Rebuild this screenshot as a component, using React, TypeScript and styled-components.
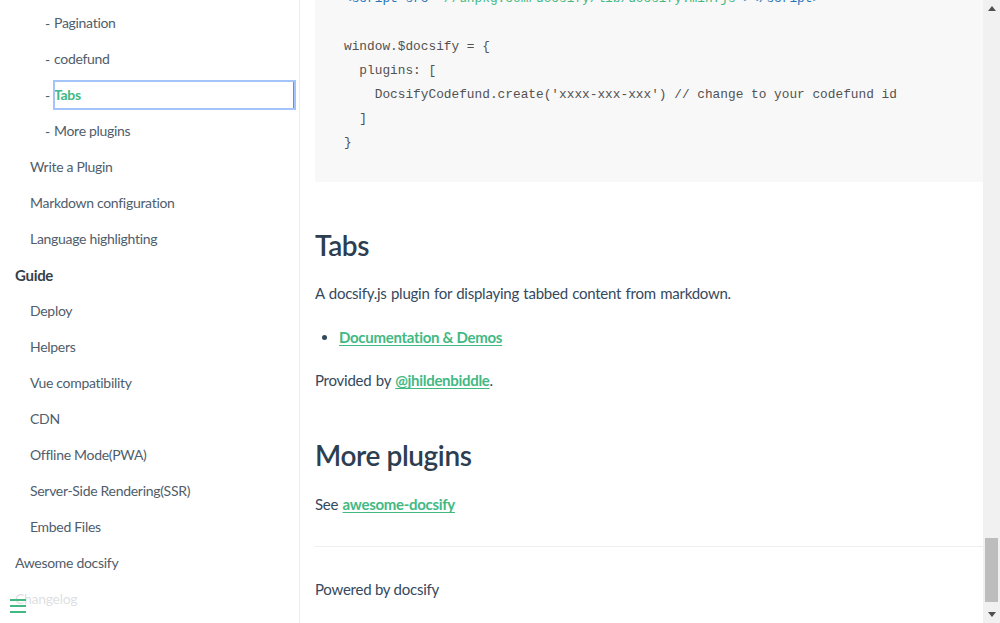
import React, { useLayoutEffect, useRef, useState } from 'react';
import styled, { createGlobalStyle } from 'styled-components';

const GlobalStyle = createGlobalStyle`
  html, body { margin: 0; padding: 0; height: 100%; }
  body {
    font-family: Lato, "Noto Sans", sans-serif;
    font-size: 15px;
    color: #34495e;
    background: #fff;
    overflow: hidden;
    -webkit-font-smoothing: antialiased;
  }
  #root { height: 100%; }
`;

type NavItem = {
  label: string;
  level: number;
  sub?: boolean;
  strong?: boolean;
  active?: boolean;
};

const nav: NavItem[] = [
  { label: 'Getting started', level: 0, strong: true },
  { label: 'Quick start', level: 1 },
  { label: 'Writing more pages', level: 1 },
  { label: 'Custom navbar', level: 1 },
  { label: 'Cover page', level: 1 },
  { label: 'Customization', level: 0, strong: true },
  { label: 'Configuration', level: 1 },
  { label: 'Themes', level: 1 },
  { label: 'List of Plugins', level: 1 },
  { label: 'Full text search', level: 2, sub: true },
  { label: 'Google Analytics', level: 2, sub: true },
  { label: 'Emoji', level: 2, sub: true },
  { label: 'External Script', level: 2, sub: true },
  { label: 'Image Zoom', level: 2, sub: true },
  { label: 'Edit on github', level: 2, sub: true },
  { label: 'Demo code with instant preview', level: 2, sub: true },
  { label: 'Copy to Clipboard', level: 2, sub: true },
  { label: 'Disqus', level: 2, sub: true },
  { label: 'Gitalk', level: 2, sub: true },
  { label: 'Pagination', level: 2, sub: true },
  { label: 'codefund', level: 2, sub: true },
  { label: 'Tabs', level: 2, sub: true, active: true },
  { label: 'More plugins', level: 2, sub: true },
  { label: 'Write a Plugin', level: 1 },
  { label: 'Markdown configuration', level: 1 },
  { label: 'Language highlighting', level: 1 },
  { label: 'Guide', level: 0, strong: true },
  { label: 'Deploy', level: 1 },
  { label: 'Helpers', level: 1 },
  { label: 'Vue compatibility', level: 1 },
  { label: 'CDN', level: 1 },
  { label: 'Offline Mode(PWA)', level: 1 },
  { label: 'Server-Side Rendering(SSR)', level: 1 },
  { label: 'Embed Files', level: 1 },
  { label: 'Awesome docsify', level: 0 },
  { label: 'Changelog', level: 0 },
];

type Section = { title: string; text: string; code: string[] };

const sections: Section[] = [
  {
    title: 'Full text search',
    text: 'By default, the hyperlink on the current page is recognized and the content is saved in localStorage. You can also specify the path to the files.',
    code: [
      '<script>',
      '  window.$docsify = {',
      "    search: 'auto', // default",
      '',
      '    search : [',
      "      '/',            // => /README.md",
      "      '/guide',       // => /guide.md",
      "      '/get-started', // => /get-started.md",
      "      '/zh-cn/',      // => /zh-cn/README.md",
      '    ],',
      '',
      '    // complete configuration parameters',
      '    search: {',
      '      maxAge: 86400000, // Expiration time, the default one day',
      "      paths: [], // or 'auto'",
      "      placeholder: 'Type to search',",
      '',
      '      // Localization',
      '      placeholder: {',
      "        '/de-de/': 'Suche',",
      "        '/': 'Type to search'",
      '      },',
      '',
      "      noData: 'No Results!',",
      '',
      '      // Localization',
      '      noData: {',
      "        '/de-de/': 'Keine Ergebnisse',",
      "        '/': 'No Results'",
      '      },',
      '',
      '      // Headline depth, 1 - 6',
      '      depth: 2,',
      '',
      '      hideOtherSidebarContent: false, // whether or not to hide other sidebar content',
      '',
      '      // To avoid search index collision',
      '      // between multiple websites under the same domain',
      "      namespace: 'website-1',",
      '    }',
      '  }',
      '</script>',
      '<script src="//unpkg.com/docsify/lib/docsify.min.js"></script>',
      '<script src="//unpkg.com/docsify/lib/plugins/search.min.js"></script>',
    ],
  },
  {
    title: 'Google Analytics',
    text: 'Install the plugin and configure the track id.',
    code: [
      '<script>',
      '  window.$docsify = {',
      "    ga: 'UA-XXXXX-Y'",
      '  }',
      '</script>',
      '<script src="//unpkg.com/docsify/lib/docsify.min.js"></script>',
      '<script src="//unpkg.com/docsify/lib/plugins/ga.min.js"></script>',
    ],
  },
  {
    title: 'Emoji',
    text: 'The default is to support parsing emoji. For example :100: will be parsed to an emoji. But it is not precise because there is no matching non-emoji string.',
    code: ['<script src="//unpkg.com/docsify/lib/plugins/emoji.min.js"></script>'],
  },
  {
    title: 'External Script',
    text: "If the script on the page is an external one (imports a js file via src attribute), you'll need this plugin to make it work.",
    code: ['<script src="//unpkg.com/docsify/lib/plugins/external-script.min.js"></script>'],
  },
  {
    title: 'Image Zoom',
    text: "Medium's image zoom. Based on medium-zoom.",
    code: [
      '<script src="//unpkg.com/docsify/lib/plugins/zoom-image.min.js"></script>',
      '',
      "![](image.png ':no-zoom')",
    ],
  },
  {
    title: 'Edit on github',
    text: 'Add Edit on github button on every pages. Provided by @njleonzhang, see document.',
    code: ['<script src="//unpkg.com/docsify-edit-on-github/index.js"></script>'],
  },
  {
    title: 'Demo code with instant preview and jsfiddle integration',
    text: 'With this plugin, sample code can be rendered on the page instantly, so that the readers can see the preview immediately. When readers expand the demo box, the source code and description are shown there. If they click the button Try in Jsfiddle, jsfiddle.net will be opened with the code of this sample, which allow readers to revise the code and try on their own.',
    code: [
      '<script src="//unpkg.com/vue/dist/vue.min.js"></script>',
      '<script src="//unpkg.com/docsify-demo-box-vue/dist/docsify-demo-box-vue.min.js"></script>',
      '<script>',
      '  window.$docsify = {',
      '    plugins: [',
      '      DemoBoxVue.create(jsResources, cssResources, bootstrapScript)',
      '    ]',
      '  }',
      '</script>',
      '',
      '<script src="//unpkg.com/react/umd/react.production.min.js"></script>',
      '<script src="//unpkg.com/react-dom/umd/react-dom.production.min.js"></script>',
      '<script src="//unpkg.com/docsify-demo-box-react/dist/docsify-demo-box-react.min.js"></script>',
      '<script>',
      '  window.$docsify = {',
      '    plugins: [',
      '      DemoBoxReact.create(globalScripts, bootstrapScript)',
      '    ]',
      '  }',
      '</script>',
    ],
  },
  {
    title: 'Copy to Clipboard',
    text: 'Add a simple Click to copy button to all preformatted code blocks to effortlessly allow users to copy example code from your docs. Provided by @jperasmus.',
    code: ['<script src="//unpkg.com/docsify-copy-code"></script>'],
  },
  {
    title: 'Disqus',
    text: 'Disqus comments.',
    code: [
      '<script>',
      '  window.$docsify = {',
      "    disqus: 'shortname'",
      '  }',
      '</script>',
      '<script src="//unpkg.com/docsify/lib/plugins/disqus.min.js"></script>',
    ],
  },
  {
    title: 'Gitalk',
    text: 'Gitalk is a modern comment component based on Github Issue and Preact.',
    code: [
      '<link rel="stylesheet" href="//unpkg.com/gitalk/dist/gitalk.css">',
      '',
      '<script src="//unpkg.com/docsify/lib/plugins/gitalk.min.js"></script>',
      '<script src="//unpkg.com/gitalk/dist/gitalk.min.js"></script>',
      '<script>',
      '  const gitalk = new Gitalk({',
      "    clientID: 'Github Application Client ID',",
      "    clientSecret: 'Github Application Client Secret',",
      "    repo: 'Github repo',",
      "    owner: 'Github repo owner',",
      "    admin: ['Github repo collaborators, only these guys can initialize github issues'],",
      '    // facebook-like distraction free mode',
      '    distractionFreeMode: false',
      '  })',
      '</script>',
    ],
  },
  {
    title: 'Pagination',
    text: 'Pagination for docsify. By @imyelo',
    code: [
      '<script src="//unpkg.com/docsify/lib/docsify.min.js"></script>',
      '<script src="//unpkg.com/docsify-pagination/dist/docsify-pagination.min.js"></script>',
    ],
  },
  {
    title: 'codefund',
    text: 'A plugin to add a simple codefund sponsorship banner to your docs.',
    code: [
      '<script src="//unpkg.com/docsify-plugin-codefund/index.js"></script>',
      '<script src="//unpkg.com/docsify/lib/docsify.min.js"></script>',
      '',
      'window.$docsify = {',
      '  plugins: [',
      "    DocsifyCodefund.create('xxxx-xxx-xxx') // change to your codefund id",
      '  ]',
      '}',
    ],
  },
];

const Layout = styled.div`
  display: flex;
  height: 100vh;
`;

const Sidebar = styled.aside`
  position: relative;
  flex: 0 0 300px;
  box-sizing: border-box;
  border-right: 1px solid rgba(0, 0, 0, 0.07);
  display: flex;
  flex-direction: column;
  overflow: hidden;
`;

const SidebarScroll = styled.nav`
  flex: 1;
  overflow-y: auto;
  scrollbar-width: none;
  &::-webkit-scrollbar { display: none; }
`;

const NavList = styled.ul`
  list-style: none;
  margin: 0;
  padding: 40px 4px 6px 0;
`;

const NavRow = styled.li<{ $level: number }>`
  height: 36px;
  display: flex;
  align-items: center;
  padding-left: ${(p) => 15 * (p.$level + 1)}px;
  font-size: 14px;
  color: #505d6b;
`;

const Dash = styled.span`
  width: 9px;
  flex: 0 0 9px;
  font-size: 14px;
  color: #505d6b;
`;

const NavLink = styled.a<{ $active?: boolean; $strong?: boolean }>`
  flex: 1;
  display: block;
  box-sizing: border-box;
  height: 28px;
  line-height: 28px;
  font-size: ${(p) => (p.$strong ? '15px' : '14px')};
  letter-spacing: -0.3px;
  font-weight: ${(p) => (p.$strong || p.$active ? 700 : 400)};
  color: ${(p) => (p.$active ? '#42b983' : p.$strong ? '#364149' : '#505d6b')};
  text-decoration: none;
  white-space: nowrap;
  overflow: hidden;
  text-overflow: ellipsis;
  ${(p) =>
    p.$active &&
    `
    border-right: 2px solid #3fb0a0;
    outline: 2px solid #a3c5fc;
    outline-offset: -1px;
  `}
`;

const Toggle = styled.button`
  position: absolute;
  left: 0;
  bottom: 0;
  width: 284px;
  padding: 10px 10px 6px;
  border: 0;
  background: rgba(255, 255, 255, 0.8);
  display: flex;
  flex-direction: column;
  align-items: flex-start;
  cursor: pointer;
`;

const ToggleBar = styled.span`
  display: block;
  width: 16px;
  height: 2px;
  margin-bottom: 4px;
  background: #42b983;
`;

const Main = styled.main`
  flex: 1;
  min-width: 0;
  overflow-y: scroll;
  scrollbar-width: none;
  &::-webkit-scrollbar { display: none; }
`;

const Article = styled.article`
  padding: 30px 0 21px 15px;
`;

const H1 = styled.h1`
  margin: 0 0 16px;
  font-size: 32px;
  line-height: 40px;
  font-weight: 700;
  color: #2c3e50;
`;

const H2 = styled.h2<{ $tight?: boolean }>`
  margin: ${(p) => (p.$tight ? 43 : 45)}px 0 0;
  padding-bottom: ${(p) => (p.$tight ? 1 : 0)}px;
  font-size: 28px;
  line-height: 36px;
  font-weight: 600;
  letter-spacing: -0.4px;
  color: #2c3e50;
`;

const P = styled.p`
  margin: 18px 0 0;
  line-height: 25.6px;
  letter-spacing: -0.25px;
  word-spacing: 0.8px;
`;

const List = styled.ul`
  margin: 18px 0 0;
  padding-left: 24px;
  line-height: 25.6px;
  letter-spacing: -0.3px;
`;

const Link = styled.a`
  color: #42b983;
  font-weight: 700;
  text-decoration: underline;
  text-underline-offset: 2px;
  letter-spacing: -0.3px;
`;

const Pre = styled.pre`
  margin: 18px 0 0;
  padding: 30px 29px 27px;
  background: #f8f8f8;
  font-family: "Liberation Mono", "DejaVu Sans Mono", monospace;
  font-size: 12.8px;
  line-height: 24px;
  color: #525252;
  white-space: pre;
  overflow: hidden;
`;

const CodeText = styled.code`
  font-family: inherit;
  font-size: inherit;
  line-height: inherit;
`;

const Tag = styled.span`
  color: #2973b7;
`;

const Str = styled.span`
  color: #42b983;
`;

const Footer = styled.footer`
  margin-top: 28px;
  border-top: 1px solid #eee;
  padding-top: 30px;
  line-height: 25.6px;
  letter-spacing: -0.25px;
`;

const ScrollBar = styled.div`
  flex: 0 0 17px;
  background: #f1f1f1;
  display: flex;
  flex-direction: column;
`;

const ArrowButton = styled.div`
  flex: 0 0 17px;
  display: flex;
  align-items: center;
  justify-content: center;
`;

const Track = styled.div`
  flex: 1;
  position: relative;
  margin: 0 2px 4px;
`;

const Thumb = styled.div`
  position: absolute;
  left: 0;
  right: 0;
  background: #bdbdbd;
`;

function CodeLine({ line }: { line: string }) {
  const m = line.match(/^(\s*)(<\w+ [\w-]+=)("[^"]*")(>(?:<\/\w+>)?)$/);
  if (m) {
    return (
      <>
        {m[1]}
        <Tag>{m[2]}</Tag>
        <Str>{m[3]}</Str>
        <Tag>{m[4]}</Tag>
        {'\n'}
      </>
    );
  }
  if (/^\s*<\/?\w+>$/.test(line)) {
    return (
      <>
        <Tag>{line}</Tag>
        {'\n'}
      </>
    );
  }
  return <>{line + '\n'}</>;
}

function Code({ lines }: { lines: string[] }) {
  return (
    <Pre>
      <CodeText>
        {lines.map((l, i) => (
          <CodeLine key={i} line={l} />
        ))}
      </CodeText>
    </Pre>
  );
}

export default function App() {
  const mainRef = useRef<HTMLElement>(null);
  const sideRef = useRef<HTMLElement>(null);
  const trackRef = useRef<HTMLDivElement>(null);
  const [thumb, setThumb] = useState({ top: 0, height: 64 });

  useLayoutEffect(() => {
    const main = mainRef.current;
    if (main) {
      main.scrollTop = main.scrollHeight;
      const track = trackRef.current;
      if (track) {
        const len = track.clientHeight;
        const h = Math.max(20, Math.round((len * main.clientHeight) / main.scrollHeight));
        const max = main.scrollHeight - main.clientHeight;
        const top = max > 0 ? Math.round(((len - h) * main.scrollTop) / max) : 0;
        setThumb({ top, height: h });
      }
    }
    if (sideRef.current) sideRef.current.scrollTop = sideRef.current.scrollHeight;
  }, []);

  return (
    <>
      <GlobalStyle />
      <Layout>
        <Sidebar>
          <SidebarScroll ref={sideRef}>
            <NavList>
              {nav.map((item) => (
                <NavRow key={item.label} $level={item.level}>
                  {item.sub && <Dash>-</Dash>}
                  <NavLink href="#" $active={item.active} $strong={item.strong}>
                    {item.label}
                  </NavLink>
                </NavRow>
              ))}
            </NavList>
          </SidebarScroll>
          <Toggle aria-label="toggle sidebar">
            <ToggleBar />
            <ToggleBar />
            <ToggleBar />
          </Toggle>
        </Sidebar>
        <Main ref={mainRef}>
          <Article>
            <H1>List of Plugins</H1>
            {sections.map((s) => (
              <React.Fragment key={s.title}>
                <H2>{s.title}</H2>
                <P>{s.text}</P>
                <Code lines={s.code} />
              </React.Fragment>
            ))}
            <H2>Tabs</H2>
            <P>A docsify.js plugin for displaying tabbed content from markdown.</P>
            <List>
              <li>
                <Link href="#">Documentation &amp; Demos</Link>
              </li>
            </List>
            <P>
              Provided by <Link href="#">@jhildenbiddle</Link>.
            </P>
            <H2 $tight>More plugins</H2>
            <P>
              See <Link href="#">awesome-docsify</Link>
            </P>
            <Footer>Powered by docsify</Footer>
          </Article>
        </Main>
        <ScrollBar>
          <ArrowButton>
            <svg width="8" height="5" viewBox="0 0 8 5">
              <path d="M0 5 L4 0 L8 5 Z" fill="#505050" />
            </svg>
          </ArrowButton>
          <Track ref={trackRef}>
            <Thumb style={{ top: thumb.top, height: thumb.height }} />
          </Track>
          <ArrowButton>
            <svg width="8" height="5" viewBox="0 0 8 5">
              <path d="M0 0 L8 0 L4 5 Z" fill="#505050" />
            </svg>
          </ArrowButton>
        </ScrollBar>
      </Layout>
    </>
  );
}
